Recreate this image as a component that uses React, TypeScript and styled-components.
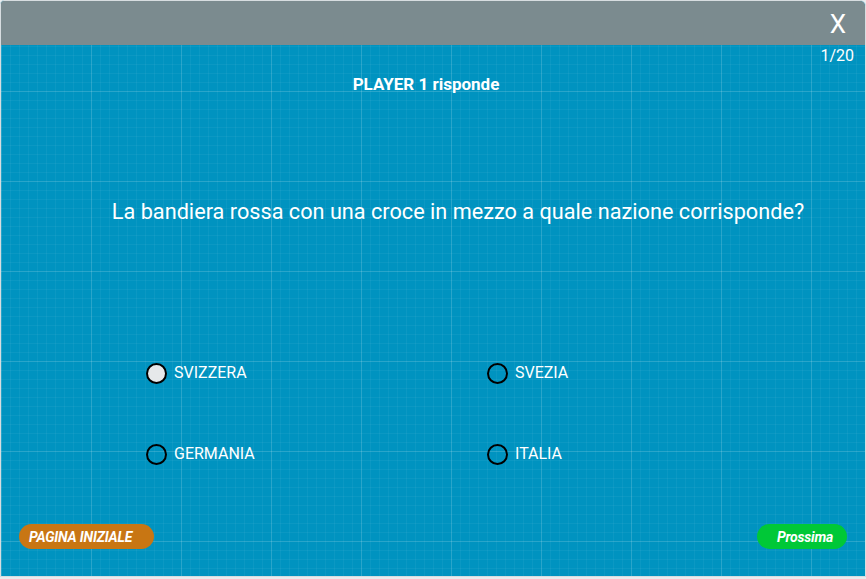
import React from "react";
import styled, { createGlobalStyle } from "styled-components";

const Global = createGlobalStyle`
  html, body { margin: 0; padding: 0; background: #e9ecee; }
  body { font-family: Roboto, "Liberation Sans", Arial, sans-serif; }
`;

const Frame = styled.div`
  box-sizing: border-box;
  width: 866px;
  height: 577px;
  border: 1px solid #d7dde0;
  border-radius: 4px 6px 0 0;
  overflow: hidden;
  display: flex;
  flex-direction: column;
  background-color: #0093c0;
  background-image:
    linear-gradient(to right, rgba(255,255,255,0.12) 1px, transparent 1px),
    linear-gradient(to bottom, rgba(255,255,255,0.12) 1px, transparent 1px),
    linear-gradient(to right, rgba(255,255,255,0.045) 1px, transparent 1px),
    linear-gradient(to bottom, rgba(255,255,255,0.045) 1px, transparent 1px);
  background-size: 90px 90px, 90px 90px, 9px 9px, 9px 9px;
  background-position: 0 0;
  color: #fff;
`;

const Header = styled.header`
  height: 44px;
  flex: none;
  background: #7b8b8f;
  display: flex;
  align-items: center;
  justify-content: flex-end;
  padding-right: 19px;
`;

const Close = styled.button`
  background: none;
  border: none;
  padding: 0;
  color: #fff;
  font-family: Roboto, sans-serif;
  font-size: 26px;
  font-weight: 400;
  cursor: pointer;
  line-height: 1;
  margin-top: 2px;
`;

const Body = styled.main`
  flex: 1;
  display: flex;
  flex-direction: column;
`;

const Counter = styled.div`
  align-self: flex-end;
  margin-right: 11px;
  margin-top: 2px;
  font-size: 16px;
  line-height: 17px;
`;

const Title = styled.h2`
  margin: 10px 0 0;
  padding-right: 14px;
  text-align: center;
  font-size: 17px;
  font-weight: 700;
  line-height: 20px;
`;

const Question = styled.p`
  margin: 105px 0 0;
  text-align: center;
  font-size: 21.7px;
  line-height: 26px;
  font-weight: 400;
  padding-left: 50px;
`;

const Options = styled.div`
  margin-top: 137px;
  padding-left: 145px;
  display: grid;
  grid-template-columns: 341px 341px;
  row-gap: 59px;
`;

const Option = styled.label`
  display: flex;
  align-items: center;
  gap: 7px;
  font-size: 16px;
  line-height: 22px;
  height: 22px;
  cursor: pointer;
`;

const Radio = styled.span<{ $checked?: boolean }>`
  box-sizing: border-box;
  width: 21px;
  height: 21px;
  border-radius: 50%;
  border: 2.7px solid #000;
  background: ${(p) => (p.$checked ? "#e6e8ea" : "transparent")};
  flex: none;
`;

const Footer = styled.footer`
  margin-top: auto;
  margin-bottom: 27px;
  display: flex;
  justify-content: space-between;
  padding: 0 18px 0 18px;
`;

const Pill = styled.button<{ $color: string; $w: number }>`
  width: ${(p) => p.$w}px;
  height: 25px;
  border: none;
  border-radius: 13px;
  background: ${(p) => p.$color};
  color: #fff;
  font-family: Roboto, sans-serif;
  font-style: italic;
  font-weight: 700;
  font-size: 14px;
  letter-spacing: -0.2px;
  padding: 0 10px;
  text-align: left;
  cursor: pointer;
`;

const PillRight = styled(Pill)`
  text-align: center;
  padding-left: 16px;
`;

const options = [
  { label: "SVIZZERA", checked: true },
  { label: "SVEZIA" },
  { label: "GERMANIA" },
  { label: "ITALIA" },
];

export default function App() {
  return (
    <>
      <Global />
      <Frame>
        <Header>
          <Close>X</Close>
        </Header>
        <Body>
          <Counter>1/20</Counter>
          <Title>PLAYER 1 risponde</Title>
          <Question>
            La bandiera rossa con una croce in mezzo a quale nazione corrisponde?
          </Question>
          <Options>
            {options.map((o) => (
              <Option key={o.label}>
                <Radio $checked={o.checked} />
                {o.label}
              </Option>
            ))}
          </Options>
          <Footer>
            <Pill $color="#c87613" $w={135}>PAGINA INIZIALE</Pill>
            <PillRight $color="#00c837" $w={90}>Prossima</PillRight>
          </Footer>
        </Body>
      </Frame>
    </>
  );
}
